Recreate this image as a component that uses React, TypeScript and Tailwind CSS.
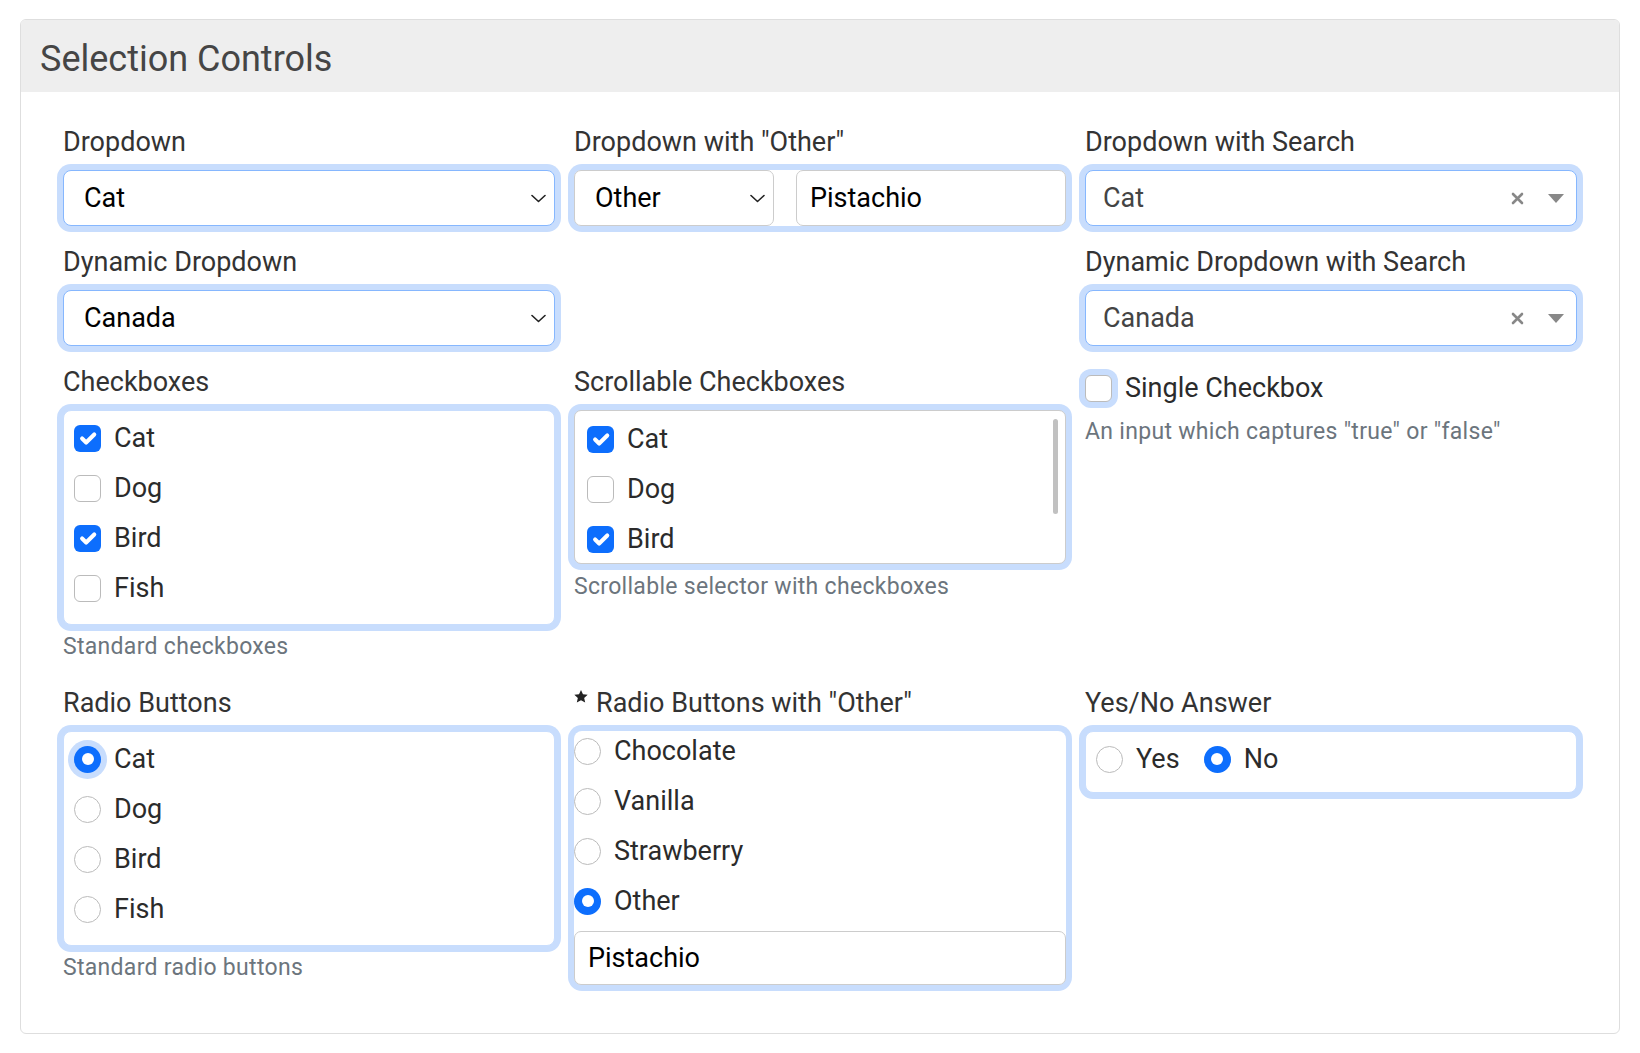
import type { ReactNode } from "react";
import clsx from "clsx";

function Label({ children }: { children: ReactNode }) {
  return (
    <div className="mb-2 flex h-[40px] items-center text-[27px] leading-[40px] text-[#333]">
      {children}
    </div>
  );
}

function Hint({ children }: { children: ReactNode }) {
  return <div className="mt-[5px] text-[23px] leading-[34px] tracking-[0.3px] text-[#6c757d]">{children}</div>;
}

function Chevron() {
  return (
    <svg width="15" height="9" viewBox="0 0 15 9" fill="none" stroke="#222" strokeWidth="1.6" strokeLinecap="round" strokeLinejoin="round">
      <path d="M1 1.5l6.5 6 6.5-6" />
    </svg>
  );
}

function NativeSelect({ value }: { value: string }) {
  return (
    <div className="flex h-[56px] items-center justify-between rounded-[8px] border border-[#86b7fe] bg-white pl-[20px] pr-[8px] text-[27px] text-black ring-[6px] ring-[#c8ddfd]">
      <span>{value}</span>
      <Chevron />
    </div>
  );
}

function SearchSelect({ value }: { value: string }) {
  return (
    <div className="flex h-[56px] items-center rounded-[8px] border border-[#86b7fe] bg-white pl-[17px] pr-[12px] text-[27px] text-[#444] ring-[6px] ring-[#c8ddfd]">
      <span className="flex-1">{value}</span>
      <svg width="13" height="13" viewBox="0 0 13 13" stroke="#888" strokeWidth="2.6" strokeLinecap="round">
        <path d="M2 2l9 9M11 2l-9 9" />
      </svg>
      <svg className="ml-[24px]" width="16" height="9" viewBox="0 0 16 9">
        <path d="M0 0h16L8 9z" fill="#888" />
      </svg>
    </div>
  );
}

function Checkbox({ checked, focus }: { checked?: boolean; focus?: boolean }) {
  if (checked) {
    return (
      <span className="flex h-[27px] w-[27px] shrink-0 items-center justify-center rounded-[6px] bg-[#0d6efd]">
        <svg width="27" height="27" viewBox="0 0 20 20" fill="none" stroke="#fff" strokeWidth="3" strokeLinecap="round" strokeLinejoin="round">
          <path d="m6 10 3 3 6-6" />
        </svg>
      </span>
    );
  }
  return (
    <span
      className={clsx(
        "h-[27px] w-[27px] shrink-0 rounded-[6px] border-[1.5px] border-[#bbbbbb] bg-white",
        focus && "ring-[6px] ring-[#c8ddfd]"
      )}
    />
  );
}

function Radio({ checked, focus }: { checked?: boolean; focus?: boolean }) {
  if (checked) {
    return (
      <span
        className={clsx(
          "flex h-[27px] w-[27px] shrink-0 items-center justify-center rounded-full bg-[#0d6efd]",
          focus && "ring-[6px] ring-[#c8ddfd]"
        )}
      >
        <span className="h-[12px] w-[12px] rounded-full bg-white" />
      </span>
    );
  }
  return <span className="h-[27px] w-[27px] shrink-0 rounded-full border-[1.5px] border-[#bbbbbb] bg-white" />;
}

function Option({ label, children }: { label: string; children: ReactNode }) {
  return (
    <div className="flex h-[40px] items-center gap-[13px]">
      {children}
      <span className="text-[27px] text-[#2b2b2b]">{label}</span>
    </div>
  );
}

function GroupBox({ children, tight }: { children: ReactNode; tight?: boolean }) {
  return (
    <div
      className={clsx(
        "flex flex-col gap-[10px] rounded-[8px] border border-[#c8ddfd] bg-white pl-[10px] pt-[7px] ring-[6px] ring-[#c8ddfd]",
        tight ? "pb-[13px]" : "pb-[16px]"
      )}
    >
      {children}
    </div>
  );
}

function Star() {
  return (
    <svg className="mr-[8px] mt-[-13px] shrink-0" width="14" height="13" viewBox="0 0 24 23">
      <path d="M12 0l3.5 7.6 8.3.9-6.2 5.6 1.8 8.2L12 18.1 4.6 22.3l1.8-8.2L.2 8.5l8.3-.9z" fill="#222" />
    </svg>
  );
}

const animals = [
  { name: "Cat", on: true },
  { name: "Dog", on: false },
  { name: "Bird", on: true },
  { name: "Fish", on: false },
];

export default function App() {
  return (
    <div className="min-h-screen bg-white px-5 pt-[19px] font-['Roboto','Liberation_Sans',sans-serif]">
      <div className="overflow-hidden rounded-[6px] border border-[#dedede]">
        <div className="flex h-[72px] items-center bg-[#eeeeee] px-[19px] pt-[6px] text-[36px] text-[#454545]">
          Selection Controls
        </div>

        <div className="px-[42px] pb-[48px] pt-[30px]">
          {/* row 1 */}
          <div className="grid grid-cols-3 gap-x-[19px]">
            <div>
              <Label>Dropdown</Label>
              <NativeSelect value="Cat" />
            </div>
            <div>
              <Label>Dropdown with "Other"</Label>
              <div className="flex h-[56px] gap-[22px] rounded-[8px] bg-white ring-[6px] ring-[#c8ddfd]">
                <div className="flex w-[200px] shrink-0 items-center justify-between rounded-[7px] border border-[#cccccc] pl-[20px] pr-[8px] text-[27px] text-black">
                  <span>Other</span>
                  <Chevron />
                </div>
                <div className="flex flex-1 items-center rounded-[7px] border border-[#cccccc] pl-[13px] text-[27px] text-black">
                  Pistachio
                </div>
              </div>
            </div>
            <div>
              <Label>Dropdown with Search</Label>
              <SearchSelect value="Cat" />
            </div>
          </div>

          {/* row 2 */}
          <div className="mt-[16px] grid grid-cols-3 gap-x-[19px]">
            <div>
              <Label>Dynamic Dropdown</Label>
              <NativeSelect value="Canada" />
            </div>
            <div />
            <div>
              <Label>Dynamic Dropdown with Search</Label>
              <SearchSelect value="Canada" />
            </div>
          </div>

          {/* row 3 */}
          <div className="mt-[16px] grid grid-cols-3 gap-x-[19px]">
            <div>
              <Label>Checkboxes</Label>
              <GroupBox>
                {animals.map((a) => (
                  <Option key={a.name} label={a.name}>
                    <Checkbox checked={a.on} />
                  </Option>
                ))}
              </GroupBox>
              <Hint>Standard checkboxes</Hint>
            </div>
            <div>
              <Label>Scrollable Checkboxes</Label>
              <div className="relative h-[154px] overflow-hidden rounded-[7px] border border-[#cccccc] bg-white pl-[12px] pt-[8px] ring-[6px] ring-[#c8ddfd]">
                <div className="flex flex-col gap-[10px]">
                  {animals.slice(0, 3).map((a) => (
                    <Option key={a.name} label={a.name}>
                      <Checkbox checked={a.on} />
                    </Option>
                  ))}
                </div>
                <div className="absolute right-[7px] top-[8px] h-[95px] w-[5px] rounded-full bg-[#c1c1c1]" />
              </div>
              <div className="mt-[6px] text-[23px] leading-[34px] tracking-[0.3px] text-[#6c757d]">
                Scrollable selector with checkboxes
              </div>
            </div>
            <div>
              <div className="mt-[6px] flex h-[40px] items-center gap-[13px]">
                <Checkbox focus />
                <span className="text-[27px] text-[#2b2b2b]">Single Checkbox</span>
              </div>
              <div className="mt-[7px] text-[23px] leading-[34px] tracking-[0.3px] text-[#6c757d]">
                An input which captures "true" or "false"
              </div>
            </div>
          </div>

          {/* row 4 */}
          <div className="mt-[19px] grid grid-cols-3 gap-x-[19px]">
            <div>
              <Label>Radio Buttons</Label>
              <GroupBox>
                {animals.map((a, i) => (
                  <Option key={a.name} label={a.name}>
                    <Radio checked={i === 0} focus={i === 0} />
                  </Option>
                ))}
              </GroupBox>
              <Hint>Standard radio buttons</Hint>
            </div>
            <div>
              <Label>
                <Star />
                Radio Buttons with "Other"
              </Label>
              <div className="flex flex-col gap-[10px] rounded-[8px] bg-white ring-[6px] ring-[#c8ddfd]">
                {["Chocolate", "Vanilla", "Strawberry", "Other"].map((f) => (
                  <Option key={f} label={f}>
                    <Radio checked={f === "Other"} />
                  </Option>
                ))}
                <div className="flex h-[54px] items-center rounded-[7px] border border-[#cccccc] pl-[13px] text-[27px] text-black">
                  Pistachio
                </div>
              </div>
            </div>
            <div>
              <Label>Yes/No Answer</Label>
              <GroupBox tight>
                <div className="flex items-center gap-[24px]">
                  <Option label="Yes">
                    <Radio />
                  </Option>
                  <Option label="No">
                    <Radio checked />
                  </Option>
                </div>
              </GroupBox>
            </div>
          </div>
        </div>
      </div>
    </div>
  );
}
